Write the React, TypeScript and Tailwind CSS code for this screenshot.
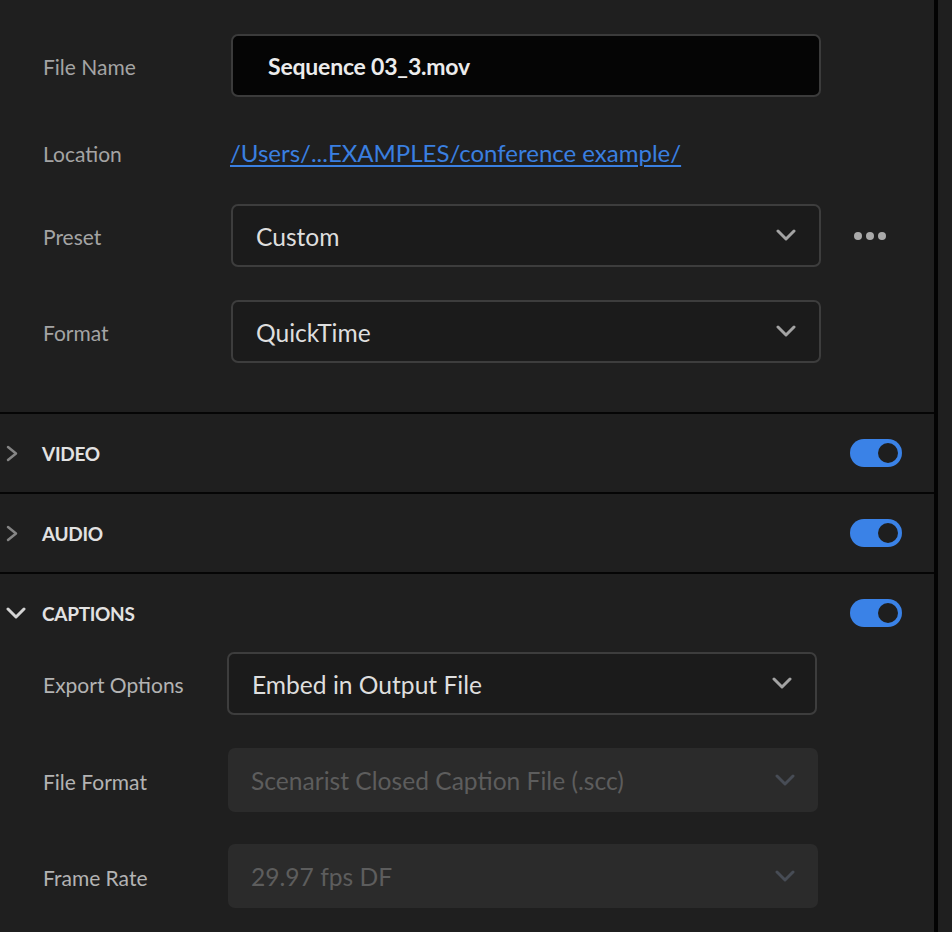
import React from "react";

const FONT = { fontFamily: "Lato, 'Open Sans', sans-serif" };

function ChevronDown({ color = "#a3a3a3" }: { color?: string }) {
  return (
    <svg width="20" height="13" viewBox="0 0 20 13" fill="none">
      <polyline points="2,2 10,10 18,2" stroke={color} strokeWidth="3" strokeLinecap="round" strokeLinejoin="round" />
    </svg>
  );
}

function Toggle() {
  return (
    <div className="relative w-[52px] h-[28px] rounded-full bg-[#3a82e7]">
      <div className="absolute right-[4px] top-[4px] w-[20px] h-[20px] rounded-full bg-[#1e1e1e]" />
    </div>
  );
}

function Select({ value, disabled = false }: { value: string; disabled?: boolean }) {
  return (
    <div
      className={
        disabled
          ? "w-[590px] h-[64px] rounded-[7px] bg-[#2b2b2b] flex items-center justify-between pl-[23px] pr-[23px]"
          : "w-[590px] h-[63px] rounded-[7px] bg-[#1b1b1b] border-2 border-[#3d3d3d] flex items-center justify-between pl-[23px] pr-[23px]"
      }
    >
      <span className={disabled ? "pt-[3px] text-[24.6px] text-[#5d5d5d]" : "pt-[3px] text-[24.6px] text-[#dedede]"}>{value}</span>
      <ChevronDown color={disabled ? "#474c55" : "#a3a3a3"} />
    </div>
  );
}

function SectionHeader({ title, open = false }: { title: string; open?: boolean }) {
  return (
    <div className="h-[78px] flex items-center justify-between pr-[32px]">
      <div className="flex items-center">
        <div className="w-[42px] flex items-center pl-[6px]">
          {open ? (
            <svg width="20" height="12" viewBox="0 0 20 12" fill="none">
              <polyline points="2,2 10,10 18,2" stroke="#d4d4d4" strokeWidth="3" strokeLinecap="round" strokeLinejoin="round" />
            </svg>
          ) : (
            <svg width="12" height="17" viewBox="0 0 12 17" fill="none">
              <polyline points="2,2 10,8.5 2,15" stroke="#858585" strokeWidth="2.5" strokeLinecap="round" strokeLinejoin="round" />
            </svg>
          )}
        </div>
        <span className="pt-[2px] text-[19px] font-bold text-[#e2e2e2] tracking-[-0.3px]">{title}</span>
      </div>
      <Toggle />
    </div>
  );
}

export default function App() {
  return (
    <div className="w-[952px] h-[932px] bg-[#1f1f1f] flex overflow-hidden" style={FONT}>
      <div className="w-[934px] flex flex-col">
        <div className="flex flex-col pl-[43px] pb-[49px]">
          <div className="mt-[34px] flex items-center">
            <div className="w-[188px] pt-[3px] text-[21px] text-[#a4a4a4]">File Name</div>
            <div className="w-[590px] h-[63px] rounded-[7px] bg-[#050505] border-2 border-[#3b3b3b] flex items-center pl-[35px]">
              <span className="pt-[2px] text-[23px] font-bold text-[#ececec] tracking-[-0.2px]">Sequence 03_3.mov</span>
            </div>
          </div>
          <div className="mt-[34px] h-[44px] flex items-center">
            <div className="w-[187px] pt-[2px] text-[21px] text-[#a4a4a4]">Location</div>
            <a className="text-[24px] text-[#3a7fe0] underline underline-offset-[3px] decoration-[2px]">
              /Users/...EXAMPLES/conference example/
            </a>
          </div>
          <div className="mt-[29px] flex items-center">
            <div className="w-[188px] pt-[3px] text-[21px] text-[#a4a4a4]">Preset</div>
            <Select value="Custom" />
            <div className="ml-[33px] flex gap-[4px]">
              <div className="w-[8px] h-[8px] rounded-full bg-[#a9a9a9]" />
              <div className="w-[8px] h-[8px] rounded-full bg-[#a9a9a9]" />
              <div className="w-[8px] h-[8px] rounded-full bg-[#a9a9a9]" />
            </div>
          </div>
          <div className="mt-[33px] flex items-center">
            <div className="w-[188px] pt-[3px] text-[21px] text-[#a4a4a4]">Format</div>
            <Select value="QuickTime" />
          </div>
        </div>
        <div className="h-[2px] bg-[#050505]" />
        <SectionHeader title="VIDEO" />
        <div className="h-[2px] bg-[#050505]" />
        <SectionHeader title="AUDIO" />
        <div className="h-[2px] bg-[#050505]" />
        <SectionHeader title="CAPTIONS" open />
        <div className="flex flex-col pl-[43px]">
          <div className="flex items-center">
            <div className="w-[184px] pt-[3px] text-[21px] text-[#b3b3b3]">Export Options</div>
            <Select value="Embed in Output File" />
          </div>
          <div className="mt-[33px] flex items-center">
            <div className="w-[185px] pt-[3px] text-[21px] text-[#b3b3b3]">File Format</div>
            <Select value="Scenarist Closed Caption File (.scc)" disabled />
          </div>
          <div className="mt-[32px] flex items-center">
            <div className="w-[185px] pt-[3px] text-[21px] text-[#b3b3b3]">Frame Rate</div>
            <Select value="29.97 fps DF" disabled />
          </div>
        </div>
      </div>
      <div className="w-[4px] h-full bg-[#030303]" />
    </div>
  );
}
